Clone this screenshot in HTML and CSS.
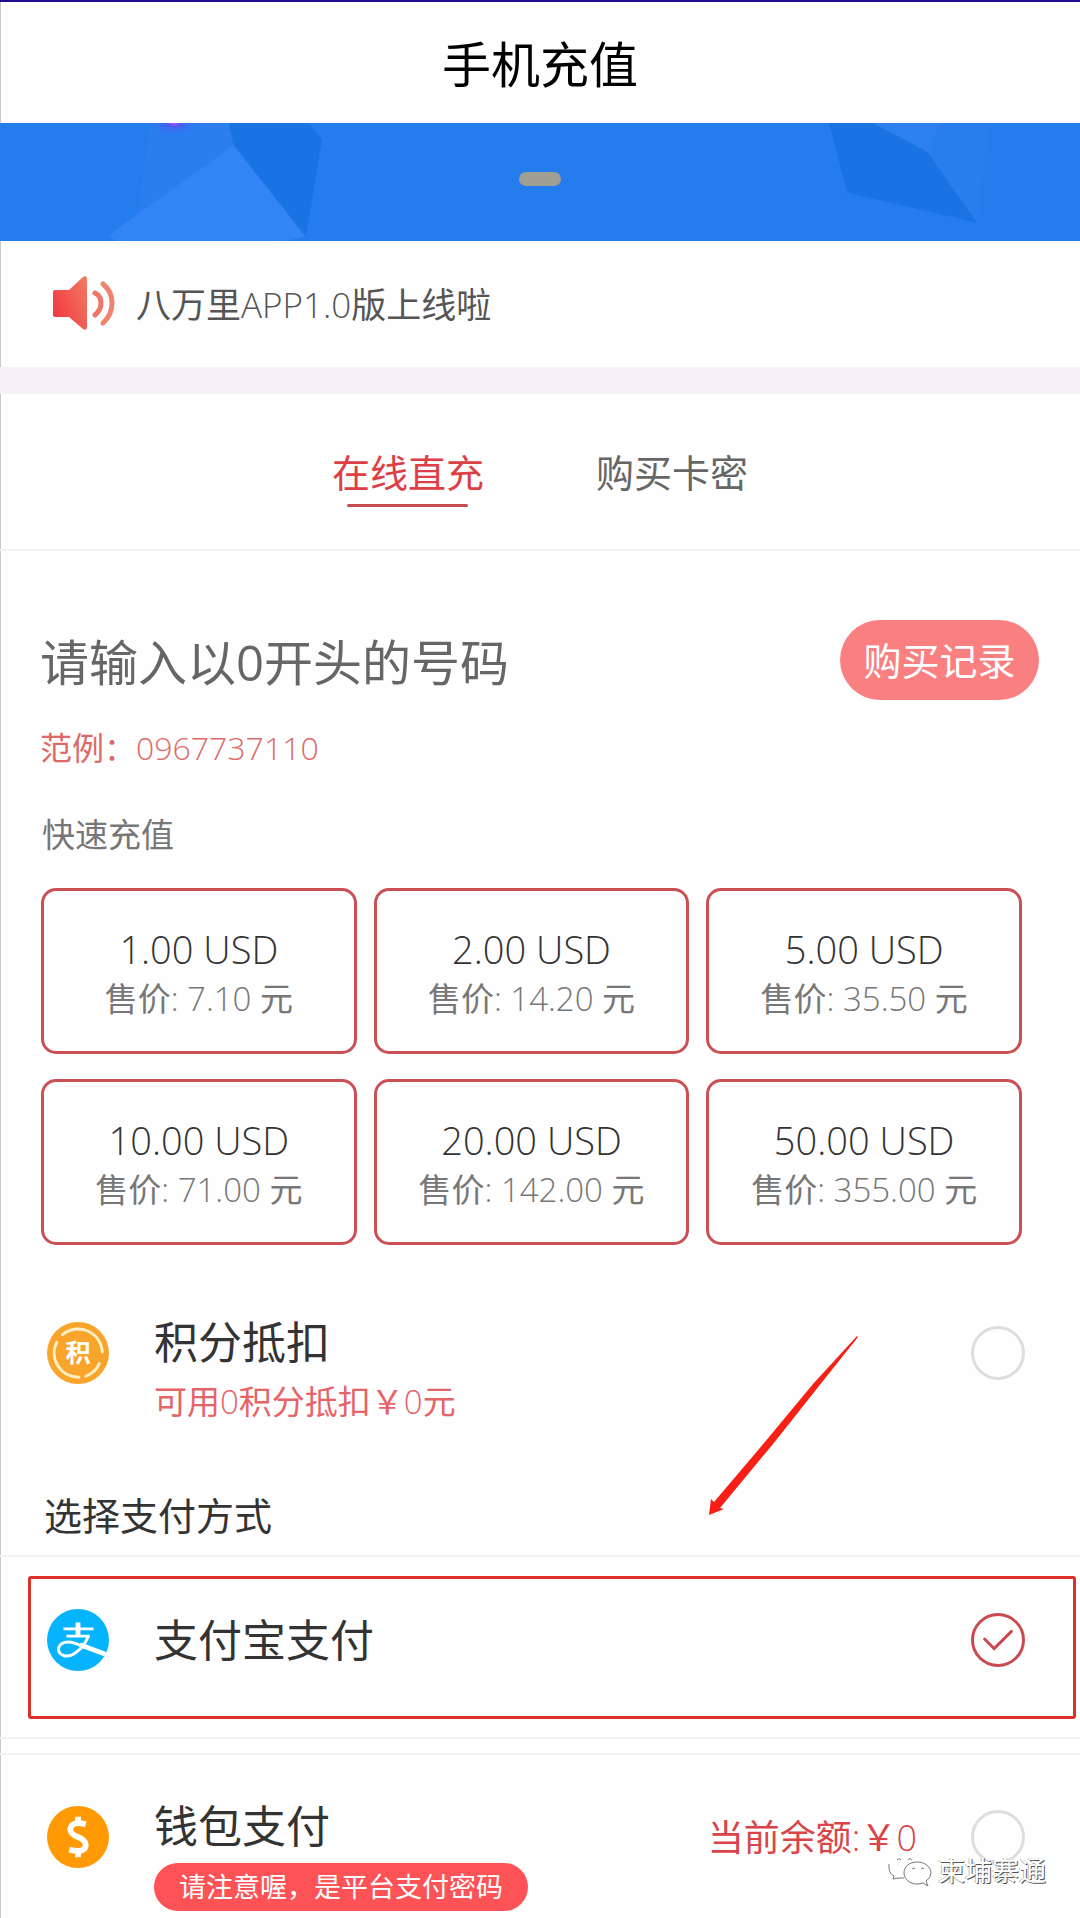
FILE: index.html
```html
<!DOCTYPE html>
<html lang="zh-CN">
<head>
<meta charset="utf-8">
<meta name="viewport" content="width=device-width, initial-scale=1">
<title>手机充值</title>
<link rel="stylesheet" href="styles.css">
</head>
<body>
<div class="page">
  <header class="header"><h1 class="header-title">手机充值</h1></header>

  <div class="banner">
    <svg class="banner-art" viewBox="0 0 1080 117" preserveAspectRatio="none" aria-hidden="true">
      <defs>
        <radialGradient id="glow"><stop offset="0" stop-color="#d04cf5"/><stop offset=".25" stop-color="#5a50f0" stop-opacity=".7"/><stop offset="1" stop-color="#257ced" stop-opacity="0"/></radialGradient>
      </defs>
      <rect width="1080" height="117" fill="#257ced"/>
      <path d="M150 0H230L233 22L138 92Z" fill="#2a7eee"/>
      <path d="M233 22L306 113L285 117H115L109 111Z" fill="#3384f5"/>
      <path d="M229 0H308L322 16L306 113L233 20Z" fill="#1a73e3"/>
      <path d="M829 0H873L928 29L977 99L847 69Z" fill="#1a73e3"/>
      <path d="M873 0H942L928 29Z" fill="#2c80f0"/>
      <path d="M942 0H990L977 99L928 29Z" fill="#297eee"/>
      <ellipse cx="174" cy="0" rx="26" ry="14" fill="url(#glow)"/>
    </svg>
    <span class="banner-dot"></span>
  </div>

  <div class="notice">
    <svg class="notice-icon" viewBox="0 0 64 56" aria-hidden="true">
      <defs><linearGradient id="horn" x1="0" y1=".6" x2="1" y2="0"><stop offset="0" stop-color="#f03e40"/><stop offset="1" stop-color="#f27a66"/></linearGradient></defs>
      <path d="M3 15H17L31 2Q35 0 35 4V52Q35 56 31 54L17 42H3Q1 42 1 40V17Q1 15 3 15Z" fill="url(#horn)"/>
      <path d="M43 18Q49 21 49 28T43 40" fill="none" stroke="#ef7666" stroke-width="5" stroke-linecap="round"/>
      <path d="M51 9Q60 16 60 28T51 48" fill="none" stroke="#f08370" stroke-width="5" stroke-linecap="round"/>
    </svg>
    <span class="notice-text">八万里<span class="latin">APP1.0</span>版上线啦</span>
  </div>

  <nav class="tabs">
    <a class="tab tab-active" href="#direct">在线直充</a>
    <a class="tab" href="#card">购买卡密</a>
  </nav>

  <main>
    <section class="recharge" id="direct">
      <div class="phone">
        <input class="phone-input" type="tel" aria-label="手机号码" placeholder="请输入以0开头的号码">
        <button class="history" type="button">购买记录</button>
      </div>
      <p class="example">范例：<span class="latin">0967737110</span></p>
      <h2 class="quick-title">快速充值</h2>
      <div class="amounts">
        <button class="amount" type="button"><span class="value">1.00 USD</span><span class="price">售价<span class="latin">: 7.10 </span>元</span></button>
        <button class="amount" type="button"><span class="value">2.00 USD</span><span class="price">售价<span class="latin">: 14.20 </span>元</span></button>
        <button class="amount" type="button"><span class="value">5.00 USD</span><span class="price">售价<span class="latin">: 35.50 </span>元</span></button>
        <button class="amount" type="button"><span class="value">10.00 USD</span><span class="price">售价<span class="latin">: 71.00 </span>元</span></button>
        <button class="amount" type="button"><span class="value">20.00 USD</span><span class="price">售价<span class="latin">: 142.00 </span>元</span></button>
        <button class="amount" type="button"><span class="value">50.00 USD</span><span class="price">售价<span class="latin">: 355.00 </span>元</span></button>
      </div>
    </section>

    <section class="points">
      <label class="option option-tall">
        <svg class="option-icon" viewBox="0 0 64 64" aria-hidden="true">
          <circle cx="32" cy="32" r="32" fill="#f9a52b"/>
          <g fill="none" stroke="#fff0c8" stroke-width="3" stroke-linecap="round">
            <path d="M16 13A25 25 0 0 1 57 31"/>
            <path d="M10 21A25 25 0 0 0 33 57"/>
            <path d="M54 43A25 25 0 0 1 40 56"/>
          </g>
          <text class="coin-text" x="32" y="41" text-anchor="middle">积</text>
        </svg>
        <span class="option-body"><span class="option-name">积分抵扣</span><span class="option-note">可用<span class="latin">0</span>积分抵扣￥<span class="latin">0</span>元</span></span>
        <input class="tick" type="checkbox" name="points">
      </label>
      <svg class="arrow" viewBox="0 0 150 182" aria-hidden="true"><path d="M148 1L149 2L106 56L64 109L11 173L15 174L0 180L2 164L5 167L50 114L104 49Z" fill="#f81f16"/></svg>
    </section>

    <section class="methods">
      <h2 class="methods-title">选择支付方式</h2>
      <div class="method method-alipay">
        <label class="option">
          <svg class="option-icon" viewBox="0 0 64 64" aria-hidden="true">
            <defs><clipPath id="disc"><circle cx="32" cy="32" r="32"/></clipPath></defs>
            <g clip-path="url(#disc)">
              <rect width="64" height="64" fill="#06b4fd"/>
              <g fill="none" stroke="#fff">
                <path d="M17 20.500H48" stroke-width="3"/>
                <path d="M32 14V28" stroke-width="5"/>
                <path d="M20 28H44" stroke-width="3"/>
                <path d="M43 27Q39 38 31 44Q24 50 17 48Q11 46 12 40Q14 34 22 34Q28 34 37 39" stroke-width="3"/>
                <path d="M34 37L64 48" stroke-width="5"/>
              </g>
            </g>
          </svg>
          <span class="option-body"><span class="option-name">支付宝支付</span></span>
          <input class="tick" type="radio" name="method" checked>
        </label>
        <span class="highlight"></span>
      </div>
      <div class="method method-wallet">
        <label class="option option-tall">
          <svg class="option-icon" viewBox="0 0 64 64" aria-hidden="true">
            <circle cx="32" cy="32" r="32" fill="#ff9a04"/>
            <path d="M40 19Q25 15 24 24Q24 29 32 32T40 41Q39 49 23 45M32 11V18M32 46V53" fill="none" stroke="#fff" stroke-width="6"/>
          </svg>
          <span class="option-body"><span class="option-name">钱包支付</span><span class="tag">请注意喔，是平台支付密码</span></span>
          <span class="balance">当前余额<span class="latin">:</span>￥<span class="latin">0</span></span>
          <input class="tick" type="radio" name="method">
        </label>
        <div class="watermark">
          <svg class="watermark-icon" viewBox="0 0 44 32" aria-hidden="true">
            <g fill="#fff" stroke="#777" stroke-width="1">
              <path d="M16 1C7 1 1 6 1 12Q1 18 6 21L5 26L11 23Q16 24 19 23Q30 21 31 12C31 6 25 1 16 1Z" stroke="none"/>
              <path d="M1 9Q0 18 6 21L5 24L11 23L16 23" fill="none"/>
              <path d="M29 7C21 7 16 12 16 18S22 29 29 29Q32 29 35 28L40 31L38 26Q43 23 43 18C43 12 37 7 29 7Z"/>
              <path d="M9 5Q11 2 13 5M20 5Q22 2 24 5M24 14Q26 12 27 14M33 14Q35 12 36 14" fill="none"/>
            </g>
          </svg>
          <span>柬埔寨通</span>
        </div>
      </div>
    </section>
  </main>
</div>
</body>
</html>
```

FILE: styles.css
```css
* { box-sizing: border-box; }

body {
  margin: 0;
  background: #fefefe;
  color: #333;
  font-family: "Open Sans", "Noto Sans CJK SC", sans-serif;
  font-weight: 400;
}

h1, h2, p { margin: 0; font-weight: inherit; }

button, input { margin: 0; font: inherit; }

/* Digits and Latin letters are set lighter than the Chinese text */
.latin, .value { font-weight: 300; white-space: pre; }

.page {
  border-top: 2px solid #200c8e;
  box-shadow: inset 1px 0 #c8c8cc;
}

.header { padding: 30px 0 27px; text-align: center; }

.header-title {
  color: #000;
  font-size: 49px;
  line-height: 64px;
}

.banner {
  position: relative;
  height: 118px;
}

.banner-art { display: block; width: 100%; height: 100%; }

.banner-dot {
  position: absolute;
  top: 49px;
  left: 50%;
  width: 42px;
  height: 14px;
  margin-left: -21px;
  border-radius: 7px;
  background: #a09f94;
}

.notice {
  display: flex;
  align-items: center;
  gap: 20px;
  padding: 34px 52px 36px;
  border-bottom: 27px solid #f4f2f6;
  color: #555;
  font-size: 35px;
  line-height: 52px;
}

.notice-icon { width: 64px; height: 56px; }
.notice-text { padding-top: 4px; }

.tabs {
  display: flex;
  justify-content: center;
  gap: 112px;
  padding: 48px 0 42px;
  border-bottom: 2px solid #f2f2f2;
}

.tab {
  display: flex;
  flex-direction: column;
  align-items: center;
  color: #666;
  font-size: 38px;
  line-height: 60px;
  text-decoration: none;
}

.tab::after {
  width: 121px;
  height: 3px;
  margin-top: 2px;
  border-radius: 2px;
  content: "";
}

.tab-active { color: #dc4046; }
.tab-active::after { background: #c84b50; }

.recharge { padding: 69px 41px 0 40px; }

.phone {
  display: flex;
  align-items: center;
  justify-content: space-between;
  gap: 24px;
}

.phone-input {
  flex: 1;
  min-width: 0;
  height: 80px;
  padding: 4px 0 0;
  border: 0;
  background: none;
  color: #333;
  font-size: 49px;
}

.phone-input::placeholder { color: #666; opacity: 1; }

.history {
  width: 199px;
  height: 80px;
  padding: 0 0 4px;
  border: 0;
  border-radius: 40px;
  background: #f97f80;
  color: #fff;
  font-size: 38px;
}

.example {
  margin-top: 24px;
  color: #dc6a66;
  font-size: 32px;
  line-height: 48px;
}

.quick-title {
  margin-top: 39px;
  padding-left: 2px;
  color: #777;
  font-size: 33px;
  line-height: 48px;
}

.amounts {
  display: grid;
  grid-template-columns: repeat(3, 1fr);
  gap: 25px 17px;
  padding: 29px 17px 0 1px;
}

.amount {
  display: flex;
  flex-direction: column;
  align-items: center;
  padding: 32px 0 28px;
  border: 3px solid #cb5054;
  border-radius: 15px;
  background: none;
}

.value { color: #333; font-size: 38px; line-height: 52px; }
.price { color: #777; font-size: 33px; line-height: 48px; }

.points { position: relative; padding-top: 65px; }

.option {
  display: flex;
  align-items: center;
  padding: 0 55px 0 47px;
}

.option-tall { align-items: flex-start; }

.option-icon { flex: none; width: 62px; height: 62px; }

.coin-text { fill: #fff; font-size: 26px; font-weight: 700; }

.option-body {
  display: flex;
  flex: 1;
  flex-direction: column;
  align-items: flex-start;
  padding-left: 45px;
}

.option-name { color: #333; font-size: 44px; line-height: 64px; }
.option-note { color: #e46468; font-size: 33px; line-height: 56px; }

.tick {
  flex: none;
  width: 54px;
  height: 54px;
  border: 3px solid #ddd;
  border-radius: 50%;
  appearance: none;
  background: #fefefe;
}

.option-tall .option-icon,
.option-tall .balance { margin-top: 12px; }
.option-tall .tick { margin-top: 16px; }

.tick:checked {
  border-color: #cb4a50;
  background: url("data:image/svg+xml,%3Csvg xmlns='http://www.w3.org/2000/svg' viewBox='0 0 50 50'%3E%3Cpath d='M11 24L21 34L39 16' fill='none' stroke='%23cb4a50' stroke-width='3' stroke-linecap='round'/%3E%3C/svg%3E") center / 100% no-repeat;
}

.arrow {
  position: absolute;
  top: 90px;
  left: 709px;
  width: 150px;
  height: 182px;
}

.methods-title {
  padding: 55px 44px 10px;
  color: #333;
  font-size: 38px;
  line-height: 60px;
}

.method { position: relative; border-top: 2px solid #f3f3f4; }

.method-alipay { padding: 51px 0 65px; border-bottom: 2px solid #f3f3f4; }

.highlight {
  position: absolute;
  inset: 19px 4px 18px 28px;
  border: 3px solid #dd3026;
  border-radius: 3px;
}

.method-wallet { margin-top: 14px; padding: 39px 0 7px; }

.tag {
  margin-top: 5px;
  padding: 0 25px;
  border-radius: 24px;
  background: #fd5356;
  color: #fff;
  font-size: 27px;
  line-height: 48px;
}

.balance {
  margin-right: 54px;
  color: #d84448;
  font-size: 36px;
  line-height: 64px;
}

.watermark {
  position: absolute;
  right: 34px;
  bottom: 28px;
  display: flex;
  align-items: center;
  gap: 6px;
  color: #fff;
  font-size: 27px;
  line-height: 38px;
  text-shadow: 1px 1px 0 #555, -1px 0 0 #bbb;
}

.watermark-icon { width: 44px; height: 32px; }
```
